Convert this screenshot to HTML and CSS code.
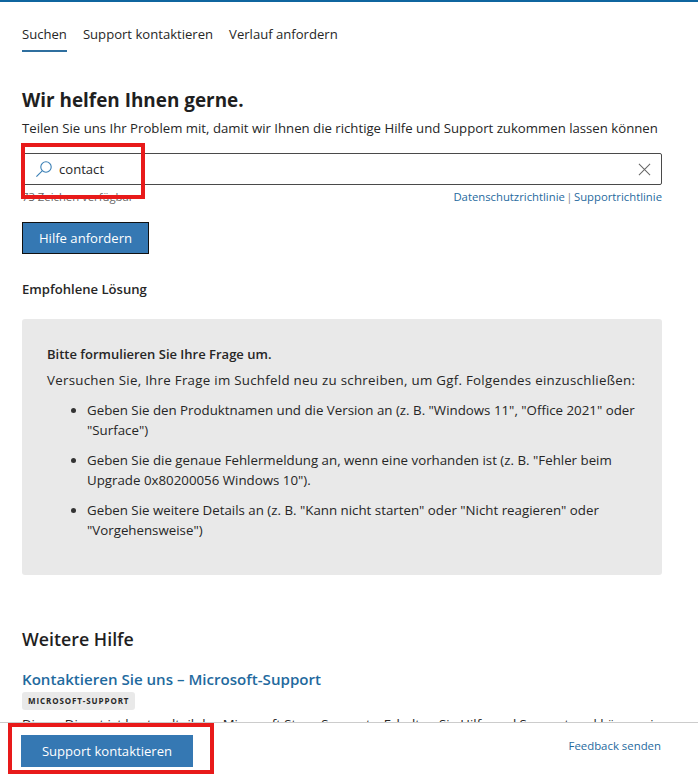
FILE: index.html
```html
<!DOCTYPE html>
<html lang="de">
<head>
    <meta charset="UTF-8">
    <meta name="viewport" content="width=device-width, initial-scale=1.0">
    <title>Hilfe und Support</title>
    <link rel="stylesheet" href="styles.css">
</head>
<body>
    <div class="app">
        <div class="content">
            <nav class="tabs">
                <a class="tab active">Suchen</a>
                <a class="tab">Support kontaktieren</a>
                <a class="tab">Verlauf anfordern</a>
            </nav>

            <h1>Wir helfen Ihnen gerne.</h1>
            <p class="intro">Teilen Sie uns Ihr Problem mit, damit wir Ihnen die richtige Hilfe und Support zukommen lassen können</p>

            <div class="search">
                <svg class="search-icon" width="18" height="18" viewBox="0 0 18 18" fill="none" stroke="#3a7fb5" stroke-width="1.1">
                    <circle cx="11" cy="7" r="5.2"/>
                    <path d="M7.2 10.8 1.4 16.6"/>
                </svg>
                <span class="search-text">contact</span>
                <svg class="clear-icon" width="13" height="13" viewBox="0 0 14 14" fill="none" stroke="#666" stroke-width="1.1">
                    <path d="M1 1 13 13M13 1 1 13"/>
                </svg>
            </div>
            <div class="search-meta">
                <span class="counter">73 Zeichen verfügbar</span>
                <span class="policy"><a>Datenschutzrichtlinie</a> <i>|</i> <a>Supportrichtlinie</a></span>
            </div>

            <button class="btn btn-help">Hilfe anfordern</button>

            <h2 class="solution-title">Empfohlene Lösung</h2>

            <div class="solution">
                <p class="solution-head">Bitte formulieren Sie Ihre Frage um.</p>
                <p>Versuchen Sie, Ihre Frage im Suchfeld neu zu schreiben, um Ggf. Folgendes einzuschließen:</p>
                <ul>
                    <li>Geben Sie den Produktnamen und die Version an (z. B. "Windows 11", "Office 2021" oder "Surface")</li>
                    <li>Geben Sie die genaue Fehlermeldung an, wenn eine vorhanden ist (z. B. "Fehler beim Upgrade 0x80200056 Windows 10").</li>
                    <li>Geben Sie weitere Details an (z. B. "Kann nicht starten" oder "Nicht reagieren" oder "Vorgehensweise")</li>
                </ul>
            </div>

            <h2 class="more-title">Weitere Hilfe</h2>
            <a class="result-link">Kontaktieren Sie uns – Microsoft-Support</a>
            <div><span class="tag">MICROSOFT-SUPPORT</span></div>
            <p class="result-text">Dieser Dienst ist bestandteil des Microsoft Store-Supports. Erhalten Sie Hilfe und Support und können in</p>
        </div>

        <footer class="footer">
            <button class="btn btn-contact">Support kontaktieren</button>
            <a class="feedback">Feedback senden</a>
        </footer>

        <!-- red boxes drawn over the screenshot -->
        <div class="mark mark-search"></div>
        <div class="mark mark-contact"></div>
    </div>
</body>
</html>
```

FILE: styles.css
```css
html, body {
    margin: 0;
    padding: 0;
    height: 100%;
}

body {
    font-family: "Open Sans", "Noto Sans", Arial, sans-serif;
    font-size: 13.1px;
    color: #262626;
    background: #fff;
    overflow: hidden;
}

.app {
    position: relative;
    height: 778px;
    display: flex;
    flex-direction: column;
    border-top: 2px solid #0f659f;
    box-sizing: border-box;
}

.content {
    flex: 1;
    min-height: 0;
    overflow: hidden;
    padding: 0 36px 0 22px;
}

.tabs {
    display: flex;
    gap: 16px;
    padding-top: 22px;
}

.tab {
    padding-bottom: 6px;
    line-height: 20px;
    border-bottom: 2px solid transparent;
}

.tab.active {
    border-bottom-color: #2f6f9f;
}

h1 {
    margin: 35px 0 0;
    font-size: 18.9px;
    line-height: 26px;
    font-weight: 700;
    color: #1f1f1f;
}

.intro {
    margin: 5px 0 0;
    font-size: 13.2px;
    line-height: 20px;
    white-space: nowrap;
}

.search {
    display: flex;
    align-items: center;
    height: 32px;
    margin-top: 15px;
    padding: 0 10px 0 12px;
    border: 1px solid #4a4a4a;
    border-radius: 2px;
    box-sizing: border-box;
}

.search-text {
    flex: 1;
    margin-left: 6px;
}

.search-meta {
    display: flex;
    justify-content: space-between;
    font-size: 11.3px;
    line-height: 16px;
    margin-top: 4px;
}

.counter {
    color: #666;
}

.policy {
    word-spacing: -1.5px;
}

.policy a {
    color: #1f6a9e;
}

.policy i {
    font-style: normal;
    color: #888;
}

.btn {
    display: block;
    font-family: inherit;
    font-size: 13.1px;
    color: #fff;
    background: #3578b3;
    border: 1px solid #111;
    cursor: pointer;
}

.btn-help {
    width: 127px;
    height: 32px;
    margin-top: 17px;
}

.solution-title {
    margin: 26px 0 0;
    font-size: 13.1px;
    line-height: 18px;
    font-weight: 600;
}

.solution {
    margin-top: 21px;
    padding: 25px 25px 24px;
    height: 256px;
    box-sizing: border-box;
    background: #e9e9e9;
    border-radius: 3px;
    font-size: 13.3px;
}

.solution p {
    margin: 0 0 7px;
    line-height: 20px;
    letter-spacing: 0.28px;
}

.solution .solution-head {
    font-size: 13px;
    font-weight: 600;
    margin-bottom: 6px;
    line-height: 20px;
    letter-spacing: 0;
}

.solution ul {
    margin: 0;
    padding-left: 24px;
    list-style: none;
}

.solution li {
    display: flex;
    gap: 11px;
    line-height: 20px;
    margin-top: 10px;
}

.solution li::before {
    content: "";
    flex: none;
    width: 5px;
    height: 5px;
    margin-top: 8px;
    border-radius: 50%;
    background: #333;
}

.more-title {
    margin: 52px 0 0;
    font-size: 17.8px;
    line-height: 24px;
    font-weight: 600;
    color: #1f1f1f;
}

.result-link {
    display: block;
    margin-top: 17px;
    font-size: 15.1px;
    line-height: 22px;
    font-weight: 600;
    color: #1f6a9e;
}

.tag {
    display: inline-block;
    margin-top: 1px;
    padding: 0 6px;
    font-size: 8px;
    line-height: 18px;
    font-weight: 700;
    letter-spacing: 0.9px;
    background: #e9e9e9;
    border-radius: 3px;
}

.result-text {
    margin: 4px 0 0;
    font-size: 13.2px;
    line-height: 20px;
    white-space: nowrap;
}

.footer {
    flex: none;
    height: 56px;
    display: flex;
    align-items: center;
    justify-content: space-between;
    padding: 0 37px 0 21px;
    border-top: 1px solid #ccc;
    background: #fff;
    box-sizing: border-box;
}

.btn-contact {
    width: 172px;
    height: 32px;
    border-color: #3578b3;
}

.feedback {
    font-size: 11.4px;
    margin-bottom: 10px;
    color: #1f6a9e;
}

.mark {
    position: absolute;
    box-sizing: border-box;
    border: 4px solid #e81a1a;
}

.mark-search {
    left: 21px;
    top: 141px;
    width: 124px;
    height: 56px;
}

.mark-contact {
    left: 8px;
    top: 721px;
    width: 206px;
    height: 51px;
}
```
